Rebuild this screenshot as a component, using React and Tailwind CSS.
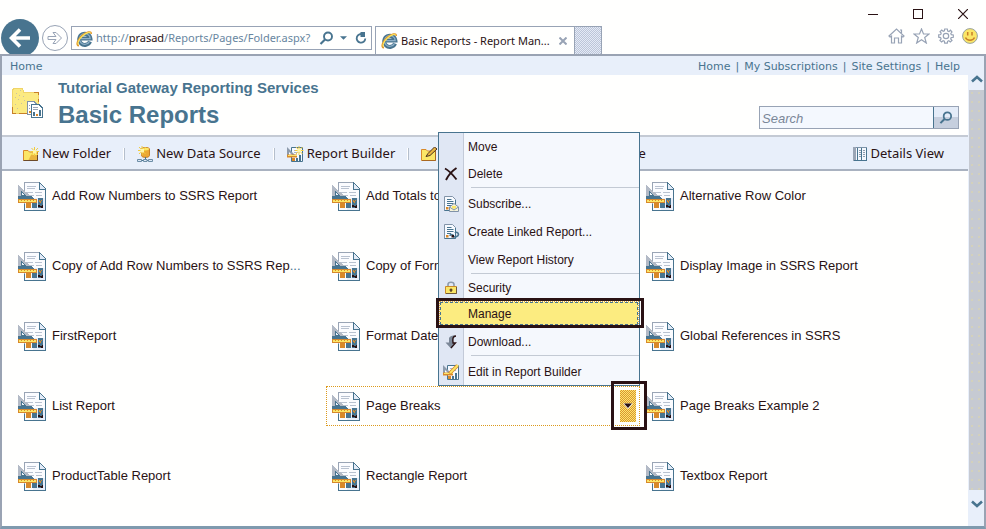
import React from "react";

const blue = "#48748f";
const ink = "#2a1214";

function IELogo() {
  return (
    <svg className="shrink-0" width="17" height="17" viewBox="0 0 17 17" fill="none" aria-hidden="true">
      <path d="M14 11.5A5.6 5.6 0 1 1 14.4 8.6H4.5" stroke={blue} strokeWidth="4" />
      <path d="M13.6 11.4A5.4 5.4 0 1 1 14.2 8.6H5" stroke="#8fb0c8" strokeWidth="1.2" />
      <path d="M3 15.6C-.6 15.6 1.6 9.6 6 5.6S15.6.6 15.2 4" stroke="#e0982c" strokeWidth="1.6" />
      <path d="M2.4 14.6C1 13 3.4 8.8 6.6 6S14 1.6 14.4 3" stroke="#fbe45c" strokeWidth="1.2" />
    </svg>
  );
}

function ReportIcon() {
  return (
    <svg className="shrink-0" width="28" height="29" viewBox="0 0 28 29" shapeRendering="crispEdges" aria-hidden="true">
      <path d="M6.5.5H21L27.500 7V28.500H6.500Z" fill="#fbfcff" stroke="#9aa5b5" />
      <path d="M15 16H27V28H15Z" fill="#e8eefa" />
      <path d="M27.500 7V28.500H6.500V22" fill="none" stroke={blue} />
      <path d="M21 0V7H28Z" fill="#e3ebf7" stroke={blue} />
      <path d="M9 4.500H18M9 6.500H17M9 10.500H15M17 10.500H24M9 13.500H16M18 13.500H24" stroke="#b9c2d0" />
      <path d="M0 3L15 16H0Z" fill="#b3bac6" />
      <path d="M0 14H13L17 17H0Z" fill={blue} />
      <path d="M3.500 9.500L7.500 13.500H3.500Z" fill="#eef3fb" stroke={blue} />
      <path d="M0 17H19V21H0Z" fill="#d8892b" />
      <path d="M1 18H18V20H1Z" fill="#fbe667" />
      <path d="M3 18.500H17" stroke="#d8892b" strokeDasharray="1 2" />
      <path d="M8 21H13V26H8Z" fill="#d8892b" />
      <path d="M14 21H19V26H14Z" fill={blue} />
      <path d="M20 16H25V26H20Z" fill={blue} />
      <path d="M21 18L22.500 20L24 18" stroke="#d8892b" fill="none" />
      <path d="M20 23H22V24H24V23H25V26H23V25H20Z" fill={ink} />
    </svg>
  );
}

function Spark({ x, y }) {
  return (
    <g transform={`translate(${x} ${y})`}>
      <path d="M4 0V9M0 4.500H8.500M1 1L7.500 8M7.500 1L1 8" stroke="#f2cc3e" />
      <path d="M2.500 3H6V6.500H2.500Z" fill="#fff6a8" />
    </g>
  );
}

function NewFolderIcon() {
  return (
    <svg width="16" height="15" viewBox="0 0 16 15" aria-hidden="true">
      <path d="M.5 3.500H5L6.500 5H14.500V13.500H.5Z" fill="#fbe667" stroke="#d8892b" />
      <path d="M5 14L8 8H14.500V14Z" fill="#eab53f" />
      <path d="M.5 13.500H14.500V7" fill="none" stroke="#6b4a2a" />
      <Spark x="7.500" y="0" />
    </svg>
  );
}

function DataSourceIcon() {
  return (
    <svg width="16" height="16" viewBox="0 0 16 16" aria-hidden="true">
      <path d="M4.500 3C4.500 1 12.500 1 12.500 3V9.500C12.500 12 4.500 12 4.500 9.500Z" fill="#eca936" stroke="#c87f28" />
      <ellipse cx="8.500" cy="3" rx="3.500" ry="1.300" fill="#fbe667" />
      <path d="M8.500 11V14M1 14.500H15" stroke={blue} />
      <path d="M.5 13.500H4.500V15.500H.5ZM6.500 13.500H10V15.500H6.500ZM11.500 13.500H15.500V15.500H11.500Z" fill="#dce7f5" stroke="#6d8ea6" />
      <Spark x="1" y="0" />
    </svg>
  );
}

function BuilderIcon({ pencil }) {
  return (
    <svg width="17" height="16" viewBox="0 0 17 16" aria-hidden="true">
      <path d="M4.500 1.500H15.500V15.500H4.500Z" fill="#f7faff" stroke={blue} />
      <path d="M7 4.500H13M7 6.500H13" stroke="#a9b4c6" />
      <path d="M0 1L9 10H0Z" fill="#8d9bac" />
      <path d="M2 6L5 9H2Z" fill="#fff" />
      <path d="M0 8.500H10V11.500H0Z" fill="#d8892b" />
      <path d="M1 9.500H10" stroke="#fbe667" />
      <path d="M5 12H8V15H5Z" fill="#d8892b" />
      <path d="M9 12H11V15H9ZM12 9H14V15H12Z" fill={blue} />
      {pencil ? (
        <>
          <path d="M6.500 9.500L14.500 1.500" stroke="#d8892b" strokeWidth="3.500" />
          <path d="M7 9L15 1" stroke="#fbe667" strokeWidth="1.800" />
        </>
      ) : (
        <Spark x="8" y="0" />
      )}
    </svg>
  );
}

function FolderSettingsIcon() {
  return (
    <svg width="17" height="15" viewBox="0 0 17 15" aria-hidden="true">
      <path d="M.5 2.500H5L6.500 4H14.500V13.500H.5Z" fill="#fbe667" stroke="#d8892b" />
      <path d="M1 13.500H14.500V4" fill="none" stroke="#a86822" />
      <path d="M5 9.500L7 6.500L13.500 0L16 2L9 8.500Z" fill="#eab53f" stroke="#4a3320" />
    </svg>
  );
}

function UploadIcon() {
  return (
    <svg width="16" height="16" viewBox="0 0 16 16" aria-hidden="true">
      <path d="M2.500.5H10L13.500 4V15.500H2.500Z" fill="#fff" stroke={blue} />
      <path d="M8 13V7M5 9.500L8 6.500L11 9.500" fill="none" stroke="#d8892b" strokeWidth="2" />
    </svg>
  );
}

function DetailsIcon() {
  return (
    <svg width="14" height="14" viewBox="0 0 14 14" shapeRendering="crispEdges" aria-hidden="true">
      <path d="M.5.5H13.500V13.500H.5Z" fill="#f3f7fd" stroke="#7c93a8" />
      <path d="M0 0H3V14H0Z" fill="#9aa5b5" />
      <path d="M1 13.500H13.500V1M4.500 1V13M8.500 1V13" fill="none" stroke={blue} />
      <path d="M6 3.500H8M6 5.500H8M6 7.500H8M6 9.500H8M10 3.500H12M10 5.500H12M10 7.500H12M10 9.500H12" stroke="#8d9bac" />
    </svg>
  );
}

function DeleteIcon() {
  return (
    <svg width="14" height="14" viewBox="0 0 14 14" fill="none" aria-hidden="true">
      <path d="M1 1.500C4 3 9 8 12.500 12.500M12.500 1C8 4 4.500 8 2 13" stroke={ink} strokeWidth="1.900" />
    </svg>
  );
}

function MiniDoc({ children }) {
  return (
    <svg width="17" height="16" viewBox="0 0 17 16" aria-hidden="true">
      <path d="M1.500.5H9.500L12.500 3.500V14.500H1.500Z" fill="#f7faff" stroke="#8193a8" />
      <path d="M1.500 14.500H12.500V4" fill="none" stroke={blue} />
      <path d="M4 3.500H8.500M4 5.500H10.500M4 7.500H10.500M4 9.500H8" stroke={blue} />
      <path d="M3 11H5.500V13.500H3Z" fill="#d8892b" />
      {children}
    </svg>
  );
}

function SubscribeIcon() {
  return (
    <MiniDoc>
      <path d="M6.500 11L11 7.500L15.500 11V15.500H6.500Z" fill="#f6f3d8" stroke="#8193a8" />
      <path d="M9 10H13V12L11 13L9 12Z" fill="#fbe667" />
      <path d="M6.500 11L11 14L15.500 11" fill="none" stroke="#8193a8" />
    </MiniDoc>
  );
}

function LinkedIcon() {
  return (
    <MiniDoc>
      <path d="M7 12C7 10 10 10 10.500 12S15.500 12.500 15.500 10.500S13 7.500 12 9" fill="none" stroke={blue} strokeWidth="1.600" />
      <path d="M8.500 11H11V13.500H8.500Z" fill={ink} />
    </MiniDoc>
  );
}

function LockIcon() {
  return (
    <svg width="12" height="14" viewBox="0 0 12 14" aria-hidden="true">
      <path d="M3 7V3.500C3 .5 9 .5 9 3.500V7" fill="none" stroke="#8d9bac" strokeWidth="1.600" />
      <path d="M.5 5.500H11.500V12.500H.5Z" fill="#fbe667" stroke="#c98a2b" />
      <path d="M1 12.500H11.500V6" fill="none" stroke="#6f5a3a" />
      <path d="M6 7.500V11M4.500 9H7.500" stroke={ink} />
    </svg>
  );
}

function DownloadIcon() {
  return (
    <svg width="12" height="14" viewBox="0 0 12 14" aria-hidden="true">
      <path d="M4 3C5 1 8 0 11 1C8.500 1.500 8.500 4 8.500 8H10.500L6 13.500L0.500 7.500H4Z" fill="#7c8898" />
      <path d="M11 1C7.500 1 7.500 4 8 8H10.500L6 13" fill="none" stroke={ink} strokeWidth="1.300" />
    </svg>
  );
}

function SearchGlyph({ size = 15 }) {
  return (
    <svg width={size} height={size} viewBox="0 0 15 15" fill="none" stroke={blue} aria-hidden="true">
      <circle cx="9" cy="5.500" r="4" strokeWidth="1.900" />
      <path d="M6 8.500L1.500 13" strokeWidth="2.200" />
    </svg>
  );
}

function PageFolderIcon() {
  return (
    <svg width="32" height="32" viewBox="0 0 32 32" shapeRendering="crispEdges" aria-hidden="true">
      <path d="M1 3L3 1H11L13 5H28V26H1Z" fill="#fbea82" />
      <path d="M1.500 3L3 1.500H11.500L13 5.500H27.500V18M1.500 3V26.500H15" fill="none" stroke="#f0d468" />
      <path d="M23 5.500H27.500V8M27.500 12V15M1 26.500H5M8 26.500H16M1.500 20V26" stroke="#c87f28" fill="none" />
      <path d="M5 6.500H6M9 3.500H10M7 12.500H8M4 17.500H5M12 9.500H13M10 16.500H11M6 21.500H7M4 10.500H5M13 13.500H14M8 8.500H9" stroke="#c8c0a4" />
      <path d="M16.500 14.500H23L26.500 18V27.500H16.500Z" fill="#fff" stroke="#8193a8" />
      <path d="M20.500 17.500H28L31.500 21V30.500H20.500Z" fill="#fff" stroke={blue} />
      <path d="M22 20.500H27M22 22.500H27M18 18.500H19M18 21.500H19" stroke="#9aa5b5" />
      <path d="M22 25H24V29H22Z" fill={blue} />
      <path d="M25 27H27V29H25ZM18 24H20V26H18Z" fill="#d8892b" />
      <path d="M28 23H30V29H28Z" fill={blue} />
    </svg>
  );
}

function BrowserChrome() {
  const tool = { fill: "none", stroke: "#98a3b5", strokeWidth: 1.2 };
  return (
    <div className="flex h-[54px] shrink-0 justify-between overflow-hidden pl-px">
      <div className="flex pt-[19px]">
        <button aria-label="Back" className="flex h-[38px] w-[38px] items-center justify-center rounded-full bg-[#48748f]">
          <svg width="22" height="20" viewBox="0 0 22 20" fill="none" stroke="#fff" strokeWidth="3.600" aria-hidden="true">
            <path d="M2 10H21M11 1.500L2.500 10L11 18.500" />
          </svg>
        </button>
        <button aria-label="Forward" className="ml-[3px] mt-1.5 flex h-[26px] w-[26px] items-center justify-center rounded-full border border-[#98a3b5]">
          <svg width="16" height="14" viewBox="0 0 16 14" fill="none" stroke="#98a3b5" aria-hidden="true">
            <path d="M1 5.500H9L6 1.500H9L14.500 7L9 12.500H6L9 8.500H1Z" />
          </svg>
        </button>
        <div className="ml-[3px] mt-[7px] flex h-6 w-[301px] items-center border border-[#98a3b5] bg-[#fffffe] pl-1 pr-1">
          <IELogo />
          <div className="ml-[3px] w-[224px] whitespace-nowrap font-['Noto_Sans'] text-[11px] leading-5 text-[#6886a0]">
            http://<span className="text-[#2a1214]">prasad</span>/Reports/Pages/Folder.aspx?
          </div>
          <button aria-label="Search the web"><SearchGlyph size={15} /></button>
          <button aria-label="Address list" className="ml-1.5">
            <svg width="7" height="4" viewBox="0 0 8 4" aria-hidden="true"><path d="M0 0H8L4 4Z" fill={blue} /></svg>
          </button>
          <button aria-label="Refresh" className="ml-2">
            <svg width="12" height="12" viewBox="0 0 12 12" fill="none" aria-hidden="true">
              <path d="M8 2.500A4.300 4.300 0 1 0 10.300 6.500" stroke={blue} strokeWidth="1.800" />
              <path d="M5.500 0H10V5H5.500Z" fill={blue} />
            </svg>
          </button>
        </div>
        <div className="ml-[3px] mt-[7px] flex h-7 w-[200px] items-center border border-b-0 border-[#98a3b5] bg-[#fffffe] pl-[5px]">
          <IELogo />
          <span className="ml-[3px] w-[156px] whitespace-nowrap font-['Noto_Sans'] text-[11px] leading-5 text-[#2a1214]">Basic Reports - Report Man...</span>
          <button aria-label="Close tab" className="ml-0.5">
            <svg width="8" height="8" viewBox="0 0 8 8" stroke="#98a3b5" strokeWidth="2" aria-hidden="true"><path d="M.5.5L7.500 7.500M7.500.5L.5 7.500" /></svg>
          </button>
        </div>
        <button aria-label="New tab" className="mt-[7px] h-7 w-[27px] border border-b-0 border-l-0 border-[#98a3b5] bg-[repeating-conic-gradient(#bcc5d8_0_25%,#e4eaf6_0_50%)] bg-[length:2px_2px]" />
      </div>
      <div className="flex flex-col items-end pr-2 pt-[9px]">
        <div className="flex items-center gap-[35px] pr-2.5">
          <button aria-label="Minimize">
            <svg width="10" height="10" viewBox="0 0 10 10" aria-hidden="true"><path d="M0 5.500H10" stroke={ink} /></svg>
          </button>
          <button aria-label="Maximize" className="h-2.5 w-2.5 border border-[#2a1214]" />
          <button aria-label="Close">
            <svg width="10" height="10" viewBox="0 0 10 10" aria-hidden="true"><path d="M0 0L10 10M10 0L0 10" stroke={ink} strokeWidth="1.200" /></svg>
          </button>
        </div>
        <div className="mt-[9px] flex items-center gap-2">
          <button aria-label="Home page">
            <svg width="17" height="16" viewBox="0 0 17 16" {...tool} aria-hidden="true"><path d="M1 8L8.500 1L16 8L15 9L13.500 8V15H10.500V10H6.500V15H3.500V8L2 9ZM12 2H13.500V5" /></svg>
          </button>
          <button aria-label="Favorites">
            <svg width="17" height="16" viewBox="0 0 17 16" {...tool} aria-hidden="true"><path d="M8.500 1L10.500 6H16L11.700 9.500L13.300 15L8.500 11.700L3.700 15L5.300 9.500L1 6H6.500Z" /></svg>
          </button>
          <button aria-label="Tools">
            <svg width="16" height="16" viewBox="0 0 16 16" {...tool} aria-hidden="true">
              <path d="M6.700 1H9.300L9.700 3L11 3.500L12.500 2.200L14 4L12.800 5.500L13.300 6.700L15.300 7V9.300L13.200 9.600L12.700 10.900L14 12.500L12.300 14L10.800 12.800L9.600 13.300L9.300 15.200H6.700L6.400 13.300L5.100 12.800L3.600 14L1.900 12.400L3.100 10.800L2.600 9.600L.7 9.200V6.800L2.700 6.500L3.200 5.200L2 3.700L3.700 2.100L5.200 3.300L6.400 2.800Z" />
              <circle cx="8" cy="8" r="2.700" />
            </svg>
          </button>
          <button aria-label="Feedback">
            <svg width="16" height="16" viewBox="0 0 16 16" aria-hidden="true">
              <circle cx="8" cy="8" r="7.400" fill="#fbe667" stroke="#98a3a0" />
              <path d="M5.700 4V7.500M10 4V7.500M3.500 9.500C5 13 11 13 12.500 9.500" fill="none" stroke="#c87f28" strokeWidth="1.500" />
            </svg>
          </button>
        </div>
      </div>
    </div>
  );
}

function ToolbarButton({ icon, children }) {
  return (
    <button className="flex items-center gap-[3px] whitespace-nowrap">
      {icon}
      {children}
    </button>
  );
}

function Divider() {
  return <span className="h-3 w-0.5 border-l border-r border-l-white border-r-[#b5bfcc]" />;
}

const menu = [
  { label: "Move" },
  { label: "Delete", icon: <DeleteIcon />, line: "ml-8 h-[3px] border-t border-[#c3cad4]" },
  { label: "Subscribe...", icon: <SubscribeIcon />, tall: true },
  { label: "Create Linked Report...", icon: <LinkedIcon />, tall: true },
  { label: "View Report History", line: "ml-8 h-px bg-[#c3cad4]" },
  { label: "Security", icon: <LockIcon /> },
  { label: "Manage", active: true },
  { label: "Download...", icon: <DownloadIcon />, line: "ml-8 h-[3px] border-t border-[#c3cad4]" },
  { label: "Edit in Report Builder", icon: <BuilderIcon pencil /> },
];

function ContextMenu() {
  return (
    <div role="menu" className="absolute -right-px bottom-full z-10 mb-px w-[202px] border border-[#48748f] bg-[linear-gradient(90deg,#e0e7f4_0_24px,#c3cad8_24px_25px,#f5f8fd_25px)] text-[12px] text-[#2a1214]">
      {menu.map((m) => (
        <React.Fragment key={m.label}>
          {m.active ? (
            <div className="relative h-[27px] px-px pt-px">
              <button role="menuitem" className="flex h-[23px] w-full items-center border border-dashed border-[#48748f] bg-[#fcec80] pl-[27px] outline-1 outline-dotted outline-[#e0a83a]">{m.label}</button>
              <span className="pointer-events-none absolute -left-[3px] -right-[5px] -top-[3px] bottom-0 border-[3px] border-[#2a1214]" />
            </div>
          ) : (
            <button role="menuitem" className={m.tall ? "flex h-7 w-full items-center" : "flex h-[27px] w-full items-center"}>
              <span className="flex w-6 justify-center">{m.icon}</span>
              <span className="ml-[5px]">{m.label}</span>
            </button>
          )}
          {m.line && <div className={m.line} />}
        </React.Fragment>
      ))}
    </div>
  );
}

const reports = [
  "Add Row Numbers to SSRS Report",
  "Add Totals to SSRS Report",
  "Alternative Row Color",
  "Copy of Add Row Numbers to SSRS Rep",
  "Copy of Format Dates",
  "Display Image in SSRS Report",
  "FirstReport",
  "Format Dates in SSRS",
  "Global References in SSRS",
  "List Report",
  "Page Breaks",
  "Page Breaks Example 2",
  "ProductTable Report",
  "Rectangle Report",
  "Textbox Report",
];

function ReportTile({ name }) {
  const selected = name === "Page Breaks";
  return (
    <div className={selected ? "relative flex h-10 items-center border border-dotted border-[#dc9a1c] pl-[5px]" : "flex h-10 items-center pl-1.5"}>
      <ReportIcon />
      <a href="#report" className="ml-1.5 whitespace-nowrap text-[13px]">
        {name}
        {name.endsWith(" Rep") && <span className="text-[#48748f]">...</span>}
      </a>
      {selected && (
        <>
          <button aria-label="Open menu" aria-expanded="true" className="ml-auto mr-[3px] flex h-8 w-4 items-center justify-center bg-[repeating-conic-gradient(#dc9430_0_25%,#fbe870_0_50%)] bg-[length:2px_2px]">
            <svg width="10" height="6" viewBox="0 0 10 6" aria-hidden="true"><path d="M0 .5H10L5 6Z" fill="#fff" /><path d="M1 .5H9L5 5Z" fill={ink} /></svg>
          </button>
          <ContextMenu />
          <span className="pointer-events-none absolute -bottom-[5px] -right-2 -top-1.5 z-20 w-9 border-[3px] border-[#2a1214]" />
        </>
      )}
    </div>
  );
}

function Chevron({ down }) {
  return (
    <svg width="12" height="8" viewBox="0 0 12 8" fill="none" aria-hidden="true">
      <path d={down ? "M1 1.500L6 6L11 1.500" : "M1 6.500L6 2L11 6.500"} stroke={blue} strokeWidth="2.600" />
    </svg>
  );
}

export default function App() {
  return (
    <div className="flex min-h-screen flex-col bg-[#fffffe] font-['Liberation_Sans',sans-serif] text-[#2a1214]">
      <BrowserChrome />
      <div className="flex flex-1 border-2 border-b-[3px] border-[#9aa3b3] border-b-[#7f9aae]">
        <div className="min-w-0 flex-1">
          <nav className="flex h-[19px] items-center justify-between bg-[#e8effa] pl-2 pr-2 pt-0.5 font-['DejaVu_Sans'] text-[11px] leading-4 text-[#48748f]">
            <a href="#home">Home</a>
            <div className="flex gap-[5px]">
              <a href="#home">Home</a><span>|</span>
              <a href="#subscriptions">My Subscriptions</a><span>|</span>
              <a href="#settings">Site Settings</a><span>|</span>
              <a href="#help">Help</a>
            </div>
          </nav>
          <header className="flex h-[60px] justify-between pl-[9px] pr-[9px] text-[#48748f]">
            <div className="flex gap-[15px]">
              <div className="pt-3"><PageFolderIcon /></div>
              <div className="whitespace-nowrap font-bold">
                <p className="pt-[3px] text-[15px] leading-5">Tutorial Gateway Reporting Services</p>
                <h1 className="text-[24px] leading-[34px]">Basic Reports</h1>
              </div>
            </div>
            <form className="mt-[31px] flex h-[23px] w-[200px] border border-[#98a3b5]">
              <input aria-label="Search" placeholder="Search" className="min-w-0 flex-1 bg-[#f4f8fe] pl-0.5 pt-0.5 text-[13px] italic leading-4 outline-none placeholder:text-[#7a8798]" />
              <button type="button" aria-label="Search" className="flex w-[25px] items-center justify-center border-l border-[#48748f] bg-[linear-gradient(#e4ecf8_50%,#c6cfde_50%)]"><SearchGlyph size={14} /></button>
            </form>
          </header>
          <div className="flex h-9 items-center justify-between border-y-2 border-[#c4cad4] border-b-[#a9b2c0] bg-[#e8effa] pl-[21px] pr-6 pt-0.5 font-['Noto_Sans'] text-[13px]">
            <div className="flex items-center gap-3">
              <ToolbarButton icon={<NewFolderIcon />}>New Folder</ToolbarButton>
              <Divider />
              <ToolbarButton icon={<DataSourceIcon />}>New Data Source</ToolbarButton>
              <Divider />
              <ToolbarButton icon={<BuilderIcon />}>Report Builder</ToolbarButton>
              <Divider />
              <ToolbarButton icon={<FolderSettingsIcon />}>Folder Settings</ToolbarButton>
              <Divider />
              <ToolbarButton icon={<UploadIcon />}>Upload File</ToolbarButton>
            </div>
            <ToolbarButton icon={<DetailsIcon />}>Details View</ToolbarButton>
          </div>
          <main className="grid grid-cols-[repeat(auto-fill,314px)] gap-y-[30px] pb-6 pl-2.5 pt-[5px]">
            {reports.map((r) => <ReportTile key={r} name={r} />)}
          </main>
        </div>
        <div className="flex w-4 flex-col border-l border-[#e8effa] bg-[#e8effa]">
          <button aria-label="Scroll up" className="flex h-[34px] items-center justify-center pt-3"><Chevron /></button>
          <div className="flex-1 bg-[#c6cad2] bg-[radial-gradient(circle_at_3px_3px,#f0e08a,transparent_1px)] bg-[length:7px_9px]" />
          <button aria-label="Scroll down" className="flex h-9 items-center justify-center pb-2"><Chevron down /></button>
        </div>
      </div>
    </div>
  );
}
